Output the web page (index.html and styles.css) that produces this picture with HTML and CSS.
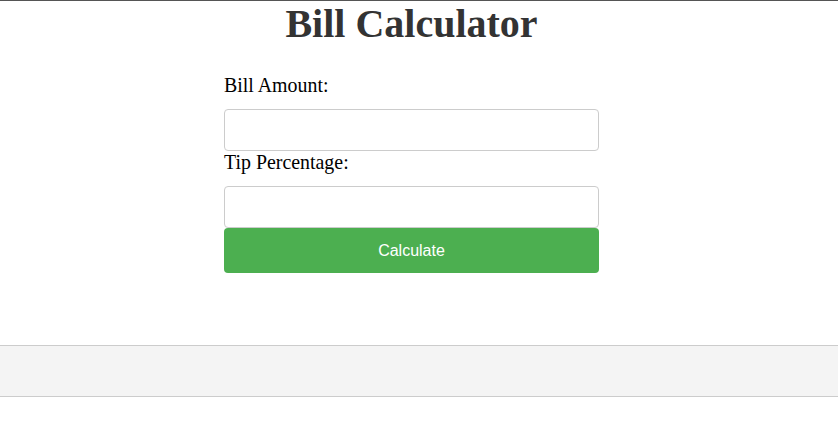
FILE: index.html
```html
<!DOCTYPE html>
<html>
<head>
<meta charset="utf-8">
<link rel="stylesheet" href="styles.css">
</head>
<body>
<div class="page">
  <h1 class="title">Bill Calculator</h1>
  <form class="calc">
    <label class="field-label" for="bill">Bill Amount:</label>
    <input class="field" id="bill" type="number">
    <label class="field-label" for="tip">Tip Percentage:</label>
    <input class="field" id="tip" type="number">
    <button class="btn" type="button">Calculate</button>
  </form>
</div>
<div class="band"></div>
</body>
</html>
```
FILE: styles.css
```css
html, body {
  margin: 0;
  padding: 0;
  background: #fff;
}
body {
  border-top: 1px solid #555;
  font-family: "Liberation Serif", "Times New Roman", serif;
}
.page {
  width: 823px;
}
.title {
  margin: 0;
  text-align: center;
  font-size: 40px;
  font-weight: bold;
  color: #333;
  line-height: 46px;
}
.calc {
  width: 375px;
  margin: 27px auto 0;
  display: flex;
  flex-direction: column;
}
.field-label {
  display: block;
  font-size: 19.9px;
  line-height: 22px;
  margin-bottom: 13px;
  color: #000;
}
.field {
  box-sizing: border-box;
  height: 42px;
  width: 375px;
  margin: 0;
  border: 1px solid #ccc;
  border-radius: 4px;
  padding: 0 10px;
  font-size: 16px;
  background: #fff;
}
.btn {
  box-sizing: border-box;
  height: 45px;
  width: 375px;
  margin: 0;
  border: none;
  border-radius: 4px;
  background: #4caf50;
  color: #fff;
  font-family: "Liberation Sans", Arial, sans-serif;
  font-size: 16px;
}
.band {
  margin-top: 72px;
  height: 50px;
  background: #f4f4f4;
  border-top: 1px solid #ccc;
  border-bottom: 1px solid #ccc;
}
```
